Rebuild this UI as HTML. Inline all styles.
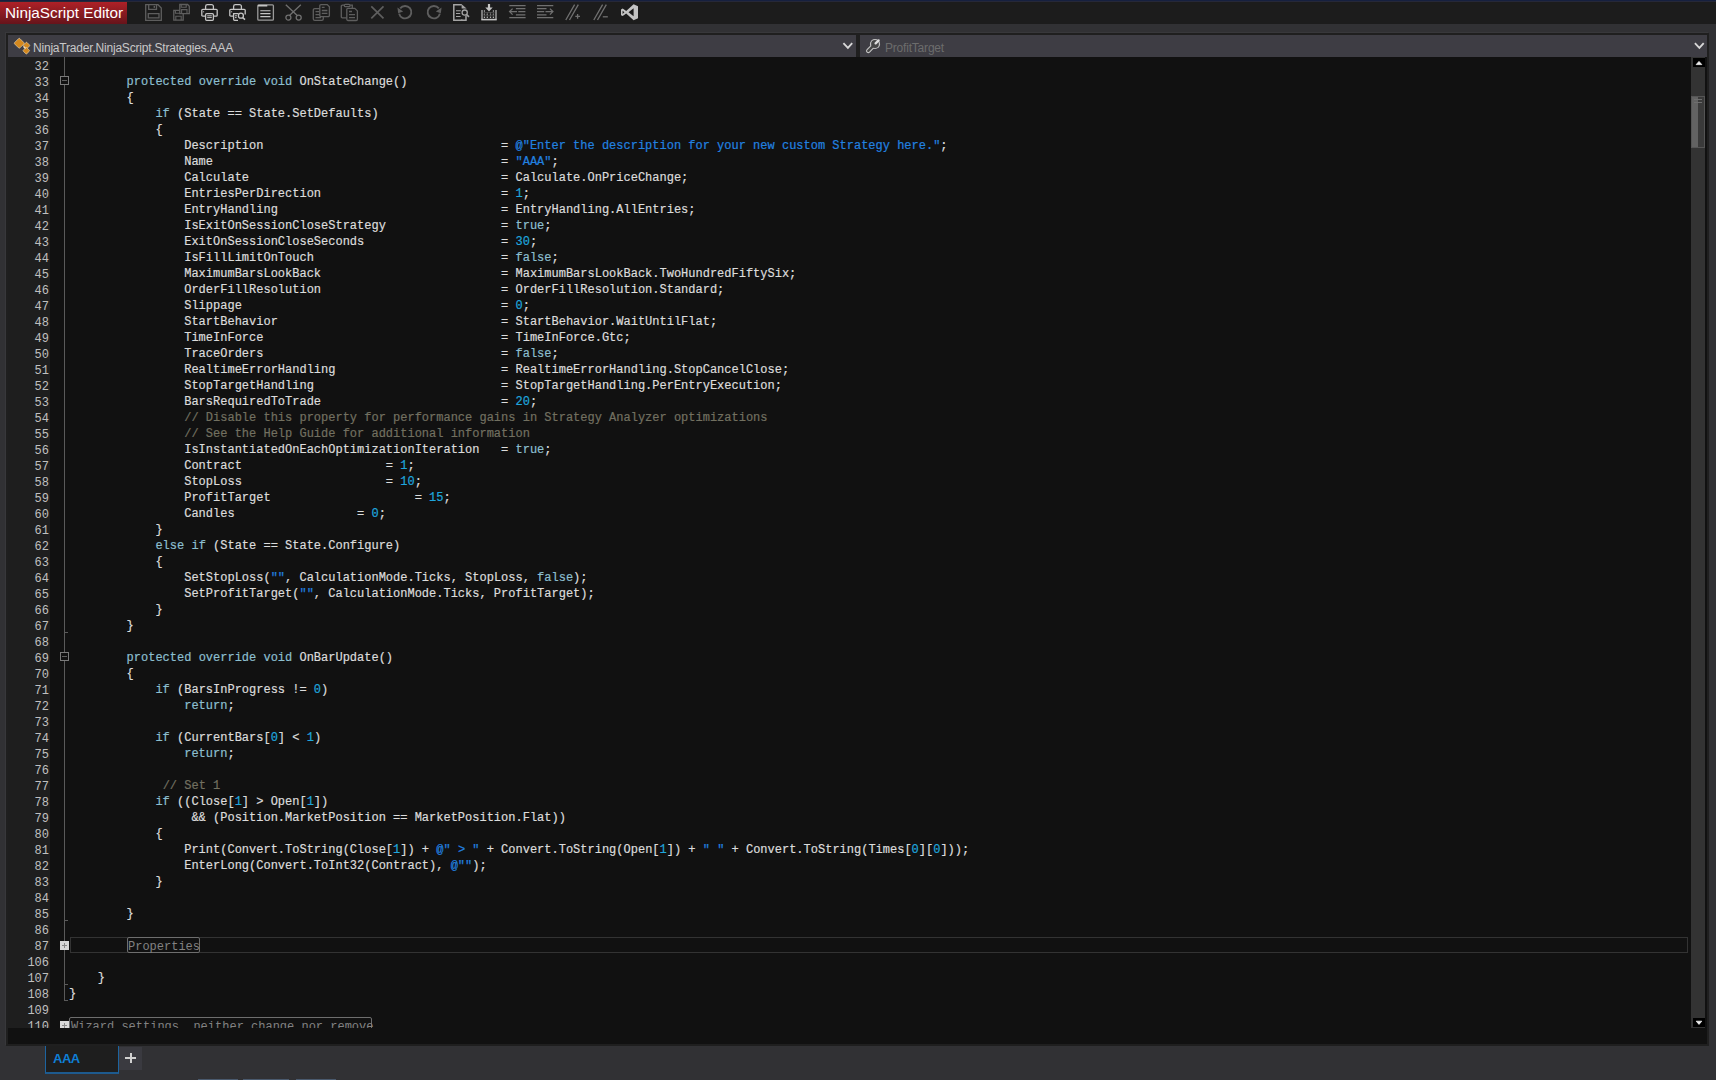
<!DOCTYPE html>
<html><head><meta charset="utf-8"><style>
html,body{margin:0;padding:0}
body{width:1716px;height:1080px;overflow:hidden;position:relative;background:#313134;font-family:"Liberation Sans",sans-serif}
.a{position:absolute}
#navy{left:0;top:0;width:1716px;height:1px;background:#16203f;box-shadow:0 1px 0 #262838}
#tb{left:0;top:2px;width:1716px;height:22px;background:#1c1c1c}
#title{left:0;top:2px;width:127px;height:22px;background:linear-gradient(#ae2127,#66141b);color:#fff;font-size:15.3px;line-height:21px;padding-left:5px;box-sizing:border-box;white-space:nowrap}
#frame{left:6px;top:33px;width:1703px;height:1013px;background:#1f1f1f;box-shadow:-1px -1px 0 #38383b}
#hdr1{left:8px;top:35px;width:848px;height:22px;background:#3e3d44}
#hdr2{left:860px;top:35px;width:847px;height:22px;background:#3e3d44}
.htxt{font-size:12px;line-height:22px;white-space:nowrap;letter-spacing:-0.2px;padding-top:2px}
#code{left:8px;top:57px;width:1699px;height:987px;background:#111111;overflow:hidden}
#gut{left:8px;top:57px;width:42px;height:971px;background:#1e1e1e}
#nums div{position:absolute;left:0;width:49px;padding-top:2px;text-align:right;font-family:"Liberation Mono",monospace;font-size:12px;line-height:16px;color:#c0c0c0}
#lines div{position:absolute;left:69px;padding-top:1px;-webkit-text-stroke:0.2px currentColor;font-family:"Liberation Mono",monospace;font-size:12px;line-height:16px;color:#dcdcdc;white-space:pre}
i{font-style:normal}
i.k{color:#8cbfcf}
i.s{color:#2282e0}
i.n{color:#1fa6dd}
i.c{color:#727060}
#vsb{left:1691px;top:57px;width:14px;height:971px;background:#333333}
.sbtn{position:absolute;left:1693px;width:12px;height:9px;background:#000}
#thumb{left:1691px;top:96px;width:14px;height:52px;box-sizing:border-box;border:1px solid #555;background:linear-gradient(90deg,#626262 0,#626262 50%,#3a3a3a 50%)}
#tab{left:45px;top:1046px;width:74px;height:28px;box-sizing:border-box;background:#1e1e1e;border:1px solid #1d64a0;border-bottom:2px solid #1d5a8e;border-top:none;color:#0f7fd6;font-size:13px;font-weight:bold;letter-spacing:-0.5px;line-height:26px;padding-left:7px}
#plus{left:119px;top:1047px;width:23px;height:23px;background:#3a3a40}
#plus:before{content:"";position:absolute;left:6px;top:10px;width:11px;height:2px;background:#d0d0d0}
#plus:after{content:"";position:absolute;left:10.5px;top:6px;width:2px;height:10px;background:#d0d0d0}

.fl{position:absolute;background:#5a5a5a}
.fb{position:absolute;width:9px;height:9px;box-sizing:border-box;border:1px solid #7a7a7a;background:#111}
.fb:after{content:"";position:absolute;left:1px;top:3px;width:5px;height:1px;background:#5e5e5e}
.fp{position:absolute;width:9px;height:9px;background:#d8d8d8}
.fp:before{content:"";position:absolute;left:2px;top:4px;width:5px;height:1px;background:#888}
.fp:after{content:"";position:absolute;left:4px;top:2px;width:1px;height:5px;background:#888}
#props{left:70px;top:937px;width:1618px;height:16px;box-sizing:border-box;border:1px solid #333}
.cbox{position:absolute;box-sizing:border-box;border:1px solid #6e6e6e;border-radius:2px;color:#828282;font-family:"Liberation Mono",monospace;font-size:12px;line-height:16px;white-space:pre;padding-top:1px}

</style></head><body>
<div class="a" id="navy"></div>
<div class="a" id="tb"></div>
<div class="a" id="title">NinjaScript Editor</div>
<svg class="a" style="left:0;top:0" width="700" height="26" fill="none" stroke-width="1.3"><g transform="translate(145,4)" color="#5e5e5e" stroke="#5e5e5e"><path d="M0.7 0.7H13L16.3 4V16.3H0.7Z M3.7 0.7V5.3H11.5V0.7 M3.3 9.7H14V13.8H3.3Z"/><rect x="8.6" y="1.9" width="1.4" height="2" fill="currentColor" stroke="none"/></g><g transform="translate(173,4)" color="#5e5e5e" stroke="#5e5e5e"><path d="M0.8 6.4H10.2V16.2H0.8Z" fill="#1c1c1c"/><path d="M2.4 6.4V9.3H7.4V6.4M2.8 16.2V12.2H8.2V16.2" stroke-width="1.1"/><path d="M6.8 0.5H14.6L16.3 2.2V9.6H6.8Z" fill="#1c1c1c"/><path d="M8.2 0.5V3.2H13.2V0.5M8.6 9.6V5.6H14V9.6" stroke-width="1.1"/></g><g transform="translate(201,4)" color="#c4c4c4" stroke="#c4c4c4"><path d="M4.6 5.3V2.4A1.8 1.8 0 0 1 6.4 0.6H10.6A1.8 1.8 0 0 1 12.4 2.4V5.3"/><path d="M4.3 12.2H1.8A1 1 0 0 1 0.8 11.2V6.3A1 1 0 0 1 1.8 5.3H15.2A1 1 0 0 1 16.2 6.3V11.2A1 1 0 0 1 15.2 12.2H12.6"/><rect x="4.6" y="9.7" width="7.8" height="6.6" rx="1"/><path d="M6.2 11.8H10.8M6.2 13.6H10.8" stroke-width="1"/><path d="M2.6 7.3V8.3" stroke-width="1"/></g><g transform="translate(229,4)" color="#c4c4c4" stroke="#c4c4c4"><path d="M4.6 5.3V2.4A1.8 1.8 0 0 1 6.4 0.6H10.6A1.8 1.8 0 0 1 12.4 2.4V5.3"/><path d="M4.3 12.2H1.8A1 1 0 0 1 0.8 11.2V6.3A1 1 0 0 1 1.8 5.3H15.2A1 1 0 0 1 16.2 6.3V10.5"/><path d="M9 16.3H5.6A1 1 0 0 1 4.6 15.3V9.7H9.5"/><path d="M6 11.8H8M6 13.6H7.6" stroke-width="1"/><path d="M2.6 7.3V8.3" stroke-width="1"/><circle cx="11.9" cy="11.7" r="2.5"/><path d="M13.7 13.6L16 15.6" stroke-width="1.5"/></g><g transform="translate(257,4)" color="#c4c4c4" stroke="#c4c4c4"><rect x="0.8" y="0.8" width="15.6" height="15.4" rx="1" stroke="#9a9a9a"/><path d="M1 1.7H10.3" stroke-width="1.6"/><path d="M3.3 6.7H13.5M3.3 9.6H13.5M3.3 12.6H13.5" stroke-width="1.1"/></g><g transform="translate(285,4)" color="#707070" stroke="#707070"><path d="M0.8 0.8L12 11.3M15.8 0.8L4.7 11.3"/><circle cx="3.4" cy="13.6" r="2.5"/><circle cx="13.7" cy="13.6" r="2.5"/></g><g transform="translate(313,4)" color="#5e5e5e" stroke="#5e5e5e"><path d="M1.8 4.6H8.8L10.3 6.1V15A1.5 1.5 0 0 1 8.8 16.4H1.8A1.5 1.5 0 0 1 0.3 15V6.1A1.5 1.5 0 0 1 1.8 4.6Z"/><path d="M2.5 7.6H6.5M2.5 10.6H8M2.5 13.6H8"/><path d="M8 0.6H14.2L16.4 2.8V11.4A1.2 1.2 0 0 1 15.2 12.6H8A1.2 1.2 0 0 1 6.8 11.4V1.8A1.2 1.2 0 0 1 8 0.6Z" fill="#1c1c1c"/><path d="M8.8 3.4H11.6M8.8 6.5H14.4M8.8 9.4H14.4"/></g><g transform="translate(341,4)" color="#5e5e5e" stroke="#5e5e5e"><path d="M3 1.2H1.3A1 1 0 0 0 0.3 2.2V12.8A1 1 0 0 0 1.3 13.8H6 M9.3 1.2H11.3V4.5"/><rect x="3.3" y="0.3" width="5.8" height="2.4" rx="1.2"/><path d="M7 4.3H13.8L16.4 6.9V15.3A1.2 1.2 0 0 1 15.2 16.5H7A1.2 1.2 0 0 1 5.8 15.3V5.5A1.2 1.2 0 0 1 7 4.3Z" fill="#1c1c1c"/><path d="M8 7.5H11M8 10.7H14M8 13.6H14"/></g><g transform="translate(369,4)" color="#5e5e5e" stroke="#5e5e5e"><path d="M2.3 2.3L14.5 14.3M14.5 2.3L2.3 14.3" stroke-width="1.7"/></g><g transform="translate(397,4)" color="#5e5e5e" stroke="#5e5e5e"><path d="M3.2 4.4A6.2 6.2 0 1 1 2.1 9.6" stroke-width="1.9"/><path d="M0.4 3.6L1.2 9.2L6.2 7.4Z" fill="currentColor" stroke="none"/></g><g transform="translate(425,4)" color="#5e5e5e" stroke="#5e5e5e"><path d="M13.8 4.4A6.2 6.2 0 1 0 14.9 9.6" stroke-width="1.9"/><path d="M16.6 3.6L15.8 9.2L10.8 7.4Z" fill="currentColor" stroke="none"/></g><g transform="translate(453,4)" color="#a4a4a4" stroke="#a4a4a4"><path d="M9.5 16.2H0.8V0.8H8.8" stroke-width="1.5"/><path d="M13 11.5V16.2H8" stroke-width="1.5"/><path d="M8.6 0.3L13.6 4.6H8.6Z" fill="currentColor" stroke="none"/><path d="M3 6.7H7.8M3 9.5H7.2M3 12.5H7.6" stroke-width="1.1"/><circle cx="11.7" cy="8.6" r="2.6" stroke-width="1.3"/><path d="M13.6 10.6L16 12.8" stroke-width="1.6"/></g><g transform="translate(481,4)" color="#c4c4c4" stroke="#c4c4c4"><path d="M8 0V4.6" stroke-width="2.2"/><path d="M4.3 3.4H11.7L8 7.6Z" fill="currentColor" stroke="none"/><path d="M1 6V15.5M15 6V15.5" stroke="#9a9a9a" stroke-width="1.5"/><path d="M0.3 15.6H15.7" stroke-width="1.6"/><g fill="currentColor" stroke="none"><circle cx="3.4" cy="7" r="0.7"/><circle cx="12.4" cy="7" r="0.7"/><circle cx="3.4" cy="10.3" r="0.7"/><circle cx="6.3" cy="10.3" r="0.7"/><circle cx="9.5" cy="10.3" r="0.7"/><circle cx="12.4" cy="10.3" r="0.7"/><circle cx="3.4" cy="13.3" r="0.7"/><circle cx="6.3" cy="13.3" r="0.7"/><circle cx="9.5" cy="13.3" r="0.7"/><circle cx="12.4" cy="13.3" r="0.7"/></g><path d="M2.5 8.6H13.5M2.5 11.8H13.5M3.4 8V13M6.3 8V13M9.5 8V13M12.4 8V13" stroke="#5a5a5a" stroke-width="0.7"/></g><g transform="translate(509,4)" color="#707070" stroke="#707070"><path d="M0.3 1.6H16.6M6.9 4.6H16.4M9.3 7.6H16.4M6.9 10.8H16.4M0.3 13.6H16.6"/><path d="M3.6 4.6L0.6 7.6L3.6 10.6M0.6 7.6H8"/></g><g transform="translate(537,4)" color="#707070" stroke="#707070"><path d="M0 1.6H16.3M0 4.6H9.5M0 7.6H7.2M0 10.8H9.5M0 13.6H16.3"/><path d="M12.9 4.6L15.9 7.6L12.9 10.6M15.9 7.6H8.5"/></g><g transform="translate(565,4)" color="#707070" stroke="#707070"><path d="M0.8 16L9.6 0.6M4.5 16L13.3 0.6"/><path d="M10.3 12.4H15M12.6 10V14.8"/></g><g transform="translate(593,4)" color="#707070" stroke="#707070"><path d="M0.8 16L9.6 0.6M4.5 16L13.3 0.6"/><path d="M9.8 12.8H14.8"/></g><g transform="translate(621,4)" color="#c4c4c4" stroke="#c4c4c4"><path fill="currentColor" stroke="none" fill-rule="evenodd" d="M12.6 0.2L17 2.3V14.2L12.6 16.3L5.2 9.4L1.7 12.1L0 11.2V5.4L1.7 4.5L5.2 7.1Z M12.6 4.3L7.5 8.3L12.6 12.2Z M1.6 6.7V9.9L3.4 8.3Z"/></g></svg>
<div class="a" id="frame"></div>
<div class="a" id="hdr1"></div>
<div class="a" id="hdr2"></div>
<svg class="a" style="left:0;top:30px" width="1716" height="30" fill="none">
<g transform="translate(0,-30)">
<g fill="#d4881e" stroke="#e8d8b8" stroke-width="0.6">
<rect x="15.5" y="39.5" width="7.5" height="7.5" rx="1" transform="rotate(45 19.25 43.25)"/>
<rect x="24" y="43" width="5" height="5" rx="0.8" transform="rotate(45 26.5 45.5)"/>
<rect x="23.8" y="48.2" width="5" height="5" rx="0.8" transform="rotate(45 26.3 50.7)"/>
</g>
<path d="M23.5 46.5L25.5 48.5" stroke="#f0e0c0" stroke-width="1.2"/>
<path d="M843.4 43.2L847.9 47.9L852.2 43.2" stroke="#d8d8d8" stroke-width="1.8"/>
<path d="M1694.9 43.2L1699.4 47.9L1703.7 43.2" stroke="#d8d8d8" stroke-width="1.8" transform="translate(0,0)"/>
<g stroke-linecap="round"><circle cx="875" cy="44" r="5.1" fill="#c4c4c4"/><path d="M875 44L868.3 50.8" stroke="#c4c4c4" stroke-width="4.6"/><circle cx="875" cy="44" r="3.9" fill="#464646"/><path d="M875 44L868.3 50.8" stroke="#464646" stroke-width="2.4"/><path d="M875.6 43.4L878.6 40.4" stroke="#dedede" stroke-width="2.3"/></g>
</g></svg>
<div class="a htxt" style="left:33px;top:35px;color:#c8c8c8">NinjaTrader.NinjaScript.Strategies.AAA</div>
<div class="a htxt" style="left:885px;top:35px;color:#6c6c6c">ProfitTarget</div>
<div class="a" id="code"></div>
<div class="a" id="gut"></div>
<div class="a" id="nums">
<div style="top:57px">32</div>
<div style="top:73px">33</div>
<div style="top:89px">34</div>
<div style="top:105px">35</div>
<div style="top:121px">36</div>
<div style="top:137px">37</div>
<div style="top:153px">38</div>
<div style="top:169px">39</div>
<div style="top:185px">40</div>
<div style="top:201px">41</div>
<div style="top:217px">42</div>
<div style="top:233px">43</div>
<div style="top:249px">44</div>
<div style="top:265px">45</div>
<div style="top:281px">46</div>
<div style="top:297px">47</div>
<div style="top:313px">48</div>
<div style="top:329px">49</div>
<div style="top:345px">50</div>
<div style="top:361px">51</div>
<div style="top:377px">52</div>
<div style="top:393px">53</div>
<div style="top:409px">54</div>
<div style="top:425px">55</div>
<div style="top:441px">56</div>
<div style="top:457px">57</div>
<div style="top:473px">58</div>
<div style="top:489px">59</div>
<div style="top:505px">60</div>
<div style="top:521px">61</div>
<div style="top:537px">62</div>
<div style="top:553px">63</div>
<div style="top:569px">64</div>
<div style="top:585px">65</div>
<div style="top:601px">66</div>
<div style="top:617px">67</div>
<div style="top:633px">68</div>
<div style="top:649px">69</div>
<div style="top:665px">70</div>
<div style="top:681px">71</div>
<div style="top:697px">72</div>
<div style="top:713px">73</div>
<div style="top:729px">74</div>
<div style="top:745px">75</div>
<div style="top:761px">76</div>
<div style="top:777px">77</div>
<div style="top:793px">78</div>
<div style="top:809px">79</div>
<div style="top:825px">80</div>
<div style="top:841px">81</div>
<div style="top:857px">82</div>
<div style="top:873px">83</div>
<div style="top:889px">84</div>
<div style="top:905px">85</div>
<div style="top:921px">86</div>
<div style="top:937px">87</div>
<div style="top:953px">106</div>
<div style="top:969px">107</div>
<div style="top:985px">108</div>
<div style="top:1001px">109</div>
<div style="top:1017px">110</div>
</div>
<div class="a" id="lines">
<div style="top:73px">        <i class="k">protected</i> <i class="k">override</i> <i class="k">void</i> OnStateChange()</div>
<div style="top:89px">        {</div>
<div style="top:105px">            <i class="k">if</i> (State == State.SetDefaults)</div>
<div style="top:121px">            {</div>
<div style="top:137px">                Description                                 = <i class="s">@"Enter the description for your new custom Strategy here."</i>;</div>
<div style="top:153px">                Name                                        = <i class="s">"AAA"</i>;</div>
<div style="top:169px">                Calculate                                   = Calculate.OnPriceChange;</div>
<div style="top:185px">                EntriesPerDirection                         = <i class="n">1</i>;</div>
<div style="top:201px">                EntryHandling                               = EntryHandling.AllEntries;</div>
<div style="top:217px">                IsExitOnSessionCloseStrategy                = <i class="k">true</i>;</div>
<div style="top:233px">                ExitOnSessionCloseSeconds                   = <i class="n">30</i>;</div>
<div style="top:249px">                IsFillLimitOnTouch                          = <i class="k">false</i>;</div>
<div style="top:265px">                MaximumBarsLookBack                         = MaximumBarsLookBack.TwoHundredFiftySix;</div>
<div style="top:281px">                OrderFillResolution                         = OrderFillResolution.Standard;</div>
<div style="top:297px">                Slippage                                    = <i class="n">0</i>;</div>
<div style="top:313px">                StartBehavior                               = StartBehavior.WaitUntilFlat;</div>
<div style="top:329px">                TimeInForce                                 = TimeInForce.Gtc;</div>
<div style="top:345px">                TraceOrders                                 = <i class="k">false</i>;</div>
<div style="top:361px">                RealtimeErrorHandling                       = RealtimeErrorHandling.StopCancelClose;</div>
<div style="top:377px">                StopTargetHandling                          = StopTargetHandling.PerEntryExecution;</div>
<div style="top:393px">                BarsRequiredToTrade                         = <i class="n">20</i>;</div>
<div style="top:409px">                <i class="c">// Disable this property for performance gains in Strategy Analyzer optimizations</i></div>
<div style="top:425px">                <i class="c">// See the Help Guide for additional information</i></div>
<div style="top:441px">                IsInstantiatedOnEachOptimizationIteration   = <i class="k">true</i>;</div>
<div style="top:457px">                Contract                    = <i class="n">1</i>;</div>
<div style="top:473px">                StopLoss                    = <i class="n">10</i>;</div>
<div style="top:489px">                ProfitTarget                    = <i class="n">15</i>;</div>
<div style="top:505px">                Candles                 = <i class="n">0</i>;</div>
<div style="top:521px">            }</div>
<div style="top:537px">            <i class="k">else</i> <i class="k">if</i> (State == State.Configure)</div>
<div style="top:553px">            {</div>
<div style="top:569px">                SetStopLoss(<i class="s">""</i>, CalculationMode.Ticks, StopLoss, <i class="k">false</i>);</div>
<div style="top:585px">                SetProfitTarget(<i class="s">""</i>, CalculationMode.Ticks, ProfitTarget);</div>
<div style="top:601px">            }</div>
<div style="top:617px">        }</div>
<div style="top:649px">        <i class="k">protected</i> <i class="k">override</i> <i class="k">void</i> OnBarUpdate()</div>
<div style="top:665px">        {</div>
<div style="top:681px">            <i class="k">if</i> (BarsInProgress != <i class="n">0</i>)</div>
<div style="top:697px">                <i class="k">return</i>;</div>
<div style="top:729px">            <i class="k">if</i> (CurrentBars[<i class="n">0</i>] &lt; <i class="n">1</i>)</div>
<div style="top:745px">                <i class="k">return</i>;</div>
<div style="top:777px">             <i class="c">// Set 1</i></div>
<div style="top:793px">            <i class="k">if</i> ((Close[<i class="n">1</i>] &gt; Open[<i class="n">1</i>])</div>
<div style="top:809px">                 &amp;&amp; (Position.MarketPosition == MarketPosition.Flat))</div>
<div style="top:825px">            {</div>
<div style="top:841px">                Print(Convert.ToString(Close[<i class="n">1</i>]) + <i class="s">@" &gt; "</i> + Convert.ToString(Open[<i class="n">1</i>]) + <i class="s">" "</i> + Convert.ToString(Times[<i class="n">0</i>][<i class="n">0</i>]));</div>
<div style="top:857px">                EnterLong(Convert.ToInt32(Contract), <i class="s">@""</i>);</div>
<div style="top:873px">            }</div>
<div style="top:905px">        }</div>
<div style="top:969px">    }</div>
<div style="top:985px">}</div>
</div>
<div class="fl" style="left:64px;top:57px;width:1px;height:944px"></div>
<div class="fl" style="left:64px;top:632px;width:4px;height:1px"></div>
<div class="fl" style="left:64px;top:920px;width:4px;height:1px"></div>
<div class="fl" style="left:64px;top:984px;width:4px;height:1px"></div>
<div class="fl" style="left:64px;top:1000px;width:4px;height:1px"></div>
<div class="fb" style="left:60px;top:76px"></div>
<div class="fb" style="left:60px;top:652px"></div>
<div class="a" id="props"></div>
<div class="cbox" style="left:127px;top:937px;width:73px;height:16px">Properties</div>
<div class="fp" style="left:60px;top:941px"></div>
<div class="cbox" style="left:69px;top:1017px;width:303px;height:16px;padding-left:1px">Wizard settings, neither change nor remove</div>
<div class="fp" style="left:60px;top:1021px"></div>
<div class="a" style="left:8px;top:1028px;width:1699px;height:16px;background:#111"></div>
<div class="a" id="vsb"></div>
<div class="sbtn" style="top:58px"></div>
<div class="sbtn" style="top:1018px"></div>
<svg class="a" style="left:1690px;top:55px" width="20" height="980"><path d="M6.2 9.6L9 6.4L11.8 9.6Z M6.2 966.2L9 969.4L11.8 966.2Z" fill="#f0f0f0" stroke="#f0f0f0" stroke-width="0.8" stroke-linejoin="round"/></svg>
<div class="a" id="thumb"></div>
<div class="a" style="left:1694px;top:99px;width:8px;height:1px;background:#6e6e6e"></div>
<div class="a" style="left:1694px;top:102px;width:8px;height:1px;background:#6e6e6e"></div>
<div class="a" id="tab">AAA</div>
<div class="a" id="plus"></div>
<div class="a" style="left:198px;top:1079px;width:40px;height:1px;background:#4a5a6e"></div>
<div class="a" style="left:243px;top:1079px;width:46px;height:1px;background:#4a5a6e"></div>
<div class="a" style="left:296px;top:1079px;width:40px;height:1px;background:#4a5a6e"></div>

</body></html>
